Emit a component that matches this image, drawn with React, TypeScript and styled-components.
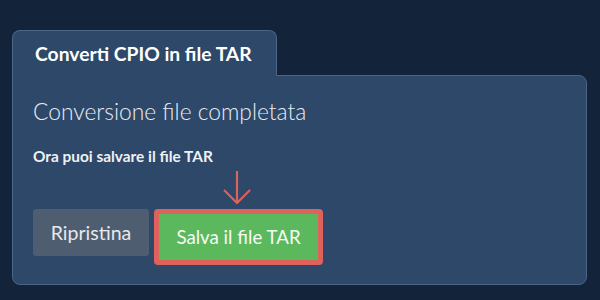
import styled, { createGlobalStyle } from "styled-components";

const GlobalStyle = createGlobalStyle`
  html, body {
    margin: 0;
    padding: 0;
    background: #12233a;
  }
  body {
    font-family: Lato, "Open Sans", sans-serif;
  }
`

const Page = styled.div`
  width: 600px;
  height: 300px;
  box-sizing: border-box;
  padding: 30px 13px 0 12px;
  background: #12233a;
`
const Tabs = styled.div`
  display: flex;
`
const Tab = styled.div`
  width: 265px;
  height: 46px;
  box-sizing: border-box;
  padding-left: 22px;
  display: flex;
  align-items: center;
  background: #2d4868;
  border: 1px solid #4b6584;
  border-bottom: none;
  border-radius: 8px 8px 0 0;
  margin-bottom: -1px;
  position: relative;
  z-index: 1;
  color: #ffffff;
  font-weight: 700;
  font-size: 19.3px;
`
const Panel = styled.section`
  box-sizing: border-box;
  height: 210px;
  padding: 20px 20px 19px;
  background: #2d4868;
  border: 1px solid #4b6584;
  border-radius: 0 8px 8px 8px;
`
const Heading = styled.h2`
  margin: 0;
  font-weight: 300;
  font-size: 22.8px;
  line-height: 30px;
  color: #e9edf2;
`
const Note = styled.p`
  margin: 21px 0 0;
  font-weight: 700;
  font-size: 15.4px;
  line-height: 18px;
  color: #eef1f5;
`
const Actions = styled.div`
  display: flex;
  align-items: flex-start;
  gap: 5px;
  margin-top: 44px;
`
const Button = styled.button<{ $variant: "reset" | "save" }>`
  border: none;
  border-radius: 3px;
  height: 47px;
  width: ${(p) => (p.$variant === "reset" ? "116px" : "159px")};
  padding: 0;
  font-family: Lato, sans-serif;
  font-size: ${(p) => (p.$variant === "reset" ? "19.5px" : "18.7px")};
  color: ${(p) => (p.$variant === "reset" ? "#e6e8eb" : "#f6fbf6")};
  background: ${(p) => (p.$variant === "reset" ? "#4e5e70" : "#5cb85c")};
  cursor: pointer;
`
const Highlight = styled.span`
  position: relative;
  display: inline-flex;
  border: 5px solid #dc625b;
  border-radius: 4px;
  & > button {
    border-radius: 0;
    height: 46px;
  }
`
const Arrow = styled.svg`
  position: absolute;
  left: 63px;
  top: -45px;
`

export default function App() {
  return (
    <>
      <GlobalStyle />
      <Page>
        <Tabs>
          <Tab>Converti CPIO in file TAR</Tab>
        </Tabs>
        <Panel>
          <Heading>Conversione file completata</Heading>
          <Note>Ora puoi salvare il file TAR</Note>
          <Actions>
            <Button $variant="reset">Ripristina</Button>
            <Highlight>
              <Arrow width="30" height="38" viewBox="0 0 30 38">
                <path
                  d="M15 2 V34 M2 21 L15 34 L28 21"
                  fill="none"
                  stroke="#dc625b"
                  strokeWidth="2.2"
                />
              </Arrow>
              <Button $variant="save">Salva il file TAR</Button>
            </Highlight>
          </Actions>
        </Panel>
      </Page>
    </>
  );
}
